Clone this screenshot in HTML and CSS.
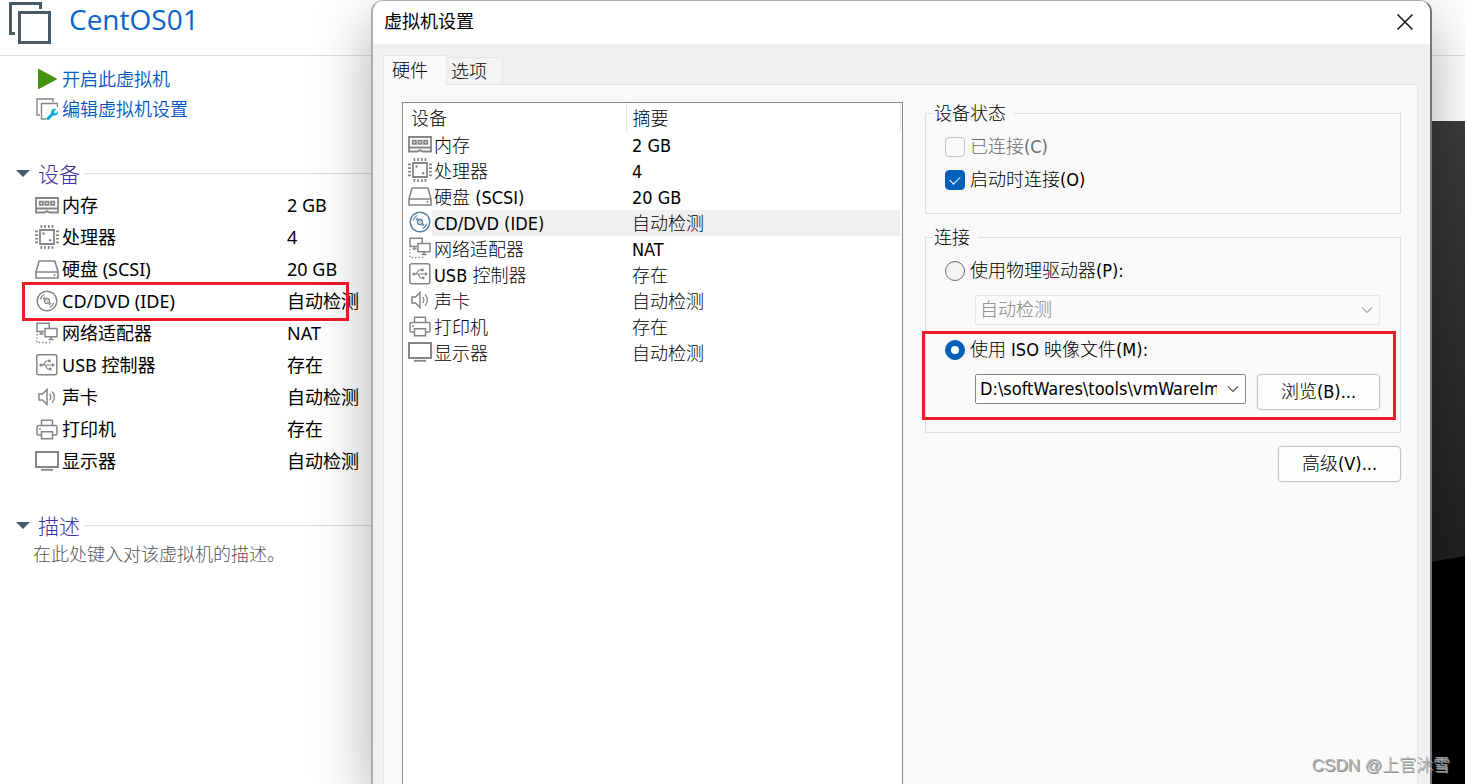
FILE: index.html
```html
<!DOCTYPE html>
<html lang="zh-CN">
<head>
<meta charset="utf-8">
<title>虚拟机设置</title>
<link rel="stylesheet" href="styles.css">
</head>
<body>
<svg class="sprite" aria-hidden="true">
  <symbol id="i-ram" viewBox="0 0 24 24"><path d="M1 5h22v10.500H1zM1 15.500v4h8.500l2.500-1.500 2.500 1.500H23v-4" stroke-width="1.800"/><path d="M4.700 8.700h3.200v3.200H4.700zM10.400 8.700h3.200v3.200h-3.200zM16.100 8.700h3.200v3.200h-3.200z" stroke-width="1.800"/></symbol>
  <symbol id="i-cpu" viewBox="0 0 24 24"><path d="M5 5h14v14H5z" stroke-width="1.800"/><path d="M5.500 1.500h13M5.500 22.500h13M1.500 5.500v13M22.500 5.500v13" stroke-width="3" stroke-dasharray="1.700 2"/><circle class="dot" cx="8.500" cy="8.500" r="1.200"/><circle class="dot" cx="15.200" cy="15.200" r="1.200"/></symbol>
  <symbol id="i-disk" viewBox="0 0 24 24"><path d="M4.200 4h15.600L23 14.500V21H1v-6.500zM1 15h22" stroke-width="1.600"/><circle class="dot" cx="19.500" cy="18" r="1"/></symbol>
  <symbol id="i-cd" viewBox="0 0 24 24"><circle cx="12" cy="12" r="9.800" stroke-width="1.500"/><circle cx="12" cy="12" r="2.500" stroke-width="1.300"/><circle class="dot" cx="12" cy="12" r=".7"/><path d="M5.300 10.300a7 7 0 0 1 4-4.800M8 10l2-2M18.700 13.700a7 7 0 0 1-4 4.800M16 14l-2 2" stroke-width="1.300"/></symbol>
  <symbol id="i-net" viewBox="0 0 24 24"><path d="M9 10.500H2V2.200h12.300V7M4.500 13h4M6.500 10.500V13" stroke-width="1.500"/><path d="M10 7.500h12v8.300H10zM16 16v2.500M13.500 18.500h5" stroke-width="1.500"/><path d="M2 13v8.500h15" stroke-width="1.400" stroke-dasharray="1.400 2"/></symbol>
  <symbol id="i-usb" viewBox="0 0 24 24"><rect x="1.800" y="1.800" width="20" height="20" rx="2" stroke-width="1.500"/><path d="M5 12h13M8 12l3-4h3M10 12l2.500 4H15" stroke-width="1.200"/><circle class="dot" cx="6" cy="12" r="1.600"/><circle class="dot" cx="14.500" cy="8" r="1.400"/><path class="dot" d="M17 10l3 2-3 2zM14 14.800h2.500v2.500H14z"/></symbol>
  <symbol id="i-sound" viewBox="0 0 24 24"><path d="M4 9h3.500L12 4.500v15L7.500 15H4z" stroke-width="1.500"/><path d="M14.500 9a4 4 0 0 1 0 6M17 6.500a7.500 7.500 0 0 1 0 11" stroke-width="1.300"/></symbol>
  <symbol id="i-print" viewBox="0 0 24 24"><path d="M6.500 8.500V3.200h11v5.300M6 18H3.500Q2 18 2 16.500V10q0-1.500 1.500-1.500h17Q22 8.500 22 10v6.500q0 1.500-1.500 1.500H18M6.500 14.700h11v7h-11z" stroke-width="1.500"/><circle class="dot" cx="5" cy="12" r=".9"/></symbol>
  <symbol id="i-screen" viewBox="0 0 24 24"><path d="M1 3h22v15H1z" stroke-width="2"/><path d="M6 20.800h12" stroke-width="1.800"/></symbol>
  <symbol id="i-chevron" viewBox="0 0 12 12"><path d="M1 3.500l5 5 5-5" stroke-width="1.100"/></symbol>
</svg>

<main class="host">
  <header class="host-head">
    <svg class="vm-logo" viewBox="0 0 44 44" aria-hidden="true"><path d="M7 33.500H2.500V3.500h30V9"/><path d="M11.500 12.500h30v30h-30z"/></svg>
    <h1 class="vm-name">CentOS01</h1>
  </header>
  <div class="host-body">
    <div class="summary">
      <nav class="actions">
        <a class="action" href="#start"><svg class="action-icon" viewBox="0 0 22 22" aria-hidden="true"><path fill="#459410" d="M2 .5L21.500 11 2 21.500z"/></svg>开启此虚拟机</a>
        <a class="action" href="#edit"><svg class="action-icon" viewBox="0 0 22 22" aria-hidden="true"><path fill="none" stroke="#858585" stroke-width="1.400" d="M4 17H1V1h16v3M10 21H5.500V5.500h16V9"/><path fill="none" stroke="#00aed6" stroke-width="3" stroke-linecap="round" d="M12 20.500l5-5"/><path fill="#00aed6" d="M20.500 11l-2.600 2.500.6 1.500 1.500.3 2-2.300c.7 3-1.500 5.200-4.500 4.500l-2.500-2.500c-.5-3 2.500-5.200 5.500-4z"/></svg>编辑虚拟机设置</a>
      </nav>
      <section>
        <h2 class="section-title">设备</h2>
        <table class="devices host-devices">
          <tr><th scope="row"><svg><use href="#i-ram"/></svg>内存</th><td>2 GB</td></tr>
          <tr><th scope="row"><svg><use href="#i-cpu"/></svg>处理器</th><td>4</td></tr>
          <tr><th scope="row"><svg><use href="#i-disk"/></svg>硬盘 (SCSI)</th><td>20 GB</td></tr>
          <tr class="marked"><th scope="row"><svg><use href="#i-cd"/></svg>CD/DVD (IDE)</th><td>自动检测</td></tr>
          <tr><th scope="row"><svg><use href="#i-net"/></svg>网络适配器</th><td>NAT</td></tr>
          <tr><th scope="row"><svg><use href="#i-usb"/></svg>USB 控制器</th><td>存在</td></tr>
          <tr><th scope="row"><svg><use href="#i-sound"/></svg>声卡</th><td>自动检测</td></tr>
          <tr><th scope="row"><svg><use href="#i-print"/></svg>打印机</th><td>存在</td></tr>
          <tr><th scope="row"><svg><use href="#i-screen"/></svg>显示器</th><td>自动检测</td></tr>
        </table>
      </section>
      <section class="about">
        <h2 class="section-title">描述</h2>
        <p class="description">在此处键入对该虚拟机的描述。</p>
      </section>
    </div>
    <div class="preview"><svg class="preview-curve" viewBox="0 0 100 240" preserveAspectRatio="none" aria-hidden="true"><path d="M0 34Q50 20 100 12V240H0z"/></svg></div>
  </div>
</main>

<div class="dialog" role="dialog" aria-labelledby="dialog-title">
  <header class="dialog-head">
    <h2 class="dialog-title" id="dialog-title">虚拟机设置</h2>
    <button class="close" type="button" aria-label="关闭"><svg viewBox="0 0 16 16"><path d="M.5.5l15 15M15.500.5l-15 15"/></svg></button>
  </header>
  <div class="dialog-body">
    <div class="tabs" role="tablist">
      <button class="tab active" type="button" role="tab" aria-selected="true">硬件</button>
      <button class="tab" type="button" role="tab" aria-selected="false">选项</button>
    </div>
    <div class="panel">
      <div class="list">
        <table class="devices">
          <thead><tr><th scope="col">设备</th><th scope="col">摘要</th></tr></thead>
          <tbody>
          <tr><th scope="row"><svg><use href="#i-ram"/></svg>内存</th><td>2 GB</td></tr>
          <tr><th scope="row"><svg><use href="#i-cpu"/></svg>处理器</th><td>4</td></tr>
          <tr><th scope="row"><svg><use href="#i-disk"/></svg>硬盘 (SCSI)</th><td>20 GB</td></tr>
          <tr class="selected"><th scope="row"><svg><use href="#i-cd"/></svg>CD/DVD (IDE)</th><td>自动检测</td></tr>
          <tr><th scope="row"><svg><use href="#i-net"/></svg>网络适配器</th><td>NAT</td></tr>
          <tr><th scope="row"><svg><use href="#i-usb"/></svg>USB 控制器</th><td>存在</td></tr>
          <tr><th scope="row"><svg><use href="#i-sound"/></svg>声卡</th><td>自动检测</td></tr>
          <tr><th scope="row"><svg><use href="#i-print"/></svg>打印机</th><td>存在</td></tr>
          <tr><th scope="row"><svg><use href="#i-screen"/></svg>显示器</th><td>自动检测</td></tr>
          </tbody>
        </table>
      </div>
      <form class="options">
        <fieldset class="group">
          <legend>设备状态</legend>
          <label class="choice disabled"><input type="checkbox" disabled>已连接(C)</label>
          <label class="choice"><input type="checkbox" checked>启动时连接(O)</label>
        </fieldset>
        <fieldset class="group">
          <legend>连接</legend>
          <label class="choice"><input type="radio" name="source">使用物理驱动器(P):</label>
          <div class="field">
            <div class="combo"><select disabled aria-label="物理驱动器"><option>自动检测</option></select><svg><use href="#i-chevron"/></svg></div>
          </div>
          <div class="iso">
            <label class="choice"><input type="radio" name="source" checked>使用 ISO 映像文件(M):</label>
            <div class="field">
              <div class="combo"><select aria-label="ISO 映像文件"><option>D:\softWares\tools\vmWareIm</option></select><svg><use href="#i-chevron"/></svg></div>
              <button class="button" type="button">浏览(B)...</button>
            </div>
          </div>
        </fieldset>
        <button class="button advanced" type="button">高级(V)...</button>
      </form>
    </div>
  </div>
</div>
<div class="watermark">CSDN @上官沐雪</div>
</body>
</html>
```
FILE: styles.css
```css
*, *::before, *::after { box-sizing: border-box; }

body {
  margin: 0;
  height: 100vh;
  position: relative;
  overflow: hidden;
  background: #fff;
  color: #000;
  font: 300 18px/24px "Noto Sans", "Open Sans", "Noto Sans CJK SC", sans-serif;
}

h1, h2, p { margin: 0; font-weight: inherit; }
svg { display: block; flex: none; }
.sprite { position: absolute; width: 0; height: 0; }
symbol { fill: none; stroke: currentColor; }
.dot { fill: currentColor; stroke: none; }

/* Host window */
.host { height: 100%; display: flex; flex-direction: column; }
.host-head {
  flex: none;
  height: 56px;
  display: flex;
  align-items: flex-start;
  gap: 17px;
  padding-left: 8px;
  border-bottom: 1px solid #dcdcdc;
}
.vm-logo { width: 44px; height: 44px; fill: none; stroke: #485a67; stroke-width: 3; }
.vm-name { font-family: "Open Sans", sans-serif; font-size: 28px; line-height: 38px; font-weight: 400; color: #0a63c9; }
.host-body { flex: 1; display: flex; min-height: 0; }
.summary { width: 400px; padding-top: 8px; }
.actions { display: flex; flex-direction: column; padding-left: 36px; }
.action {
  display: flex;
  align-items: center;
  gap: 4px;
  height: 30px;
  color: #0057c2;
  font-weight: 350;
  text-decoration: none;
}
.action-icon { width: 22px; height: 22px; }
.section-title {
  display: flex;
  align-items: center;
  gap: 4px;
  margin-top: 34px;
  padding-left: 16px;
  height: 31px;
  font-size: 21px;
  color: #4030a0;
}
.section-title::before {
  content: "";
  margin-right: 4px;
  border: 7px solid transparent;
  border-top-color: #485a67;
  border-bottom: 0;
}
.section-title::after { content: ""; flex: 1; height: 1px; background: #dcdcdc; }
.about .section-title { margin-top: 33px; }
.description { padding-left: 33px; line-height: 26px; color: #555; }

/* Device tables */
.devices { width: 100%; border-collapse: collapse; table-layout: fixed; }
.devices th, .devices td { padding: 0; font-weight: inherit; text-align: left; white-space: nowrap; }
.devices svg { display: inline-block; width: 24px; height: 24px; margin-right: 2px; vertical-align: top; color: #858585; }
.host-devices { font-weight: 400; }
.host-devices tr { height: 32px; }
.host-devices th { width: 287px; padding-left: 35px; }
.host-devices svg { margin-right: 3px; }
.marked { position: relative; }
.marked::after {
  content: "";
  position: absolute;
  left: 22px;
  top: -3px;
  width: 327px;
  height: 39px;
  border: 3px solid #ee1c24;
}

.preview {
  flex: 1;
  display: flex;
  align-items: flex-end;
  justify-content: flex-end;
  margin-top: 65px;
  background: linear-gradient(#3c3c3c, #202020 440px);
}
.preview-curve { width: 100px; height: 240px; }

/* Settings dialog */
.dialog {
  position: absolute;
  inset: 0 33px 0 371px;
  display: flex;
  flex-direction: column;
  overflow: hidden;
  border: 2px solid #adadad;
  border-top-width: 1px;
  border-bottom: 0;
  border-radius: 12px 12px 0 0;
  border-right-color: #777;
  background: #f0f0f0;
  box-shadow: 0 20px 60px rgba(0, 0, 0, .32);
  font-family: "DejaVu Sans Condensed", "DejaVu Sans", "Noto Sans CJK SC", sans-serif;
}
.dialog-head {
  flex: none;
  display: flex;
  justify-content: space-between;
  align-items: center;
  height: 43px;
  padding: 0 17px 2px 11px;
  background: #fff;
}
.dialog-title { font-size: 18px; font-weight: 400; }
.close { padding: 0; border: 0; background: none; }
.close svg { width: 16px; height: 16px; stroke: #111; stroke-width: 1.500; }
.dialog-body { flex: 1; display: flex; flex-direction: column; min-height: 0; padding: 11px 12px 0 10px; }
.tabs { display: flex; align-items: flex-end; }
.tab {
  height: 27px;
  padding: 1px 15px 0 4px;
  border: 1px solid #e5e5e5;
  border-width: 1px 1px 0 0;
  background: #f3f3f3;
  font: inherit;
}
.tab.active { height: 30px; margin-bottom: -1px; padding: 0 18px 0 8px; border-left-width: 1px; background: #f9f9f9; z-index: 1; }
.panel {
  flex: 1;
  display: flex;
  gap: 22px;
  min-height: 0;
  padding: 17px 16px 0 18px;
  border: 1px solid #e5e5e5;
  border-bottom: 0;
  background: #f9f9f9;
}
.list {
  flex: 500 1 0;
  padding-right: 1px;
  border: 1px solid #828790;
  border-bottom: 0;
  background: #fff;
}
.list tr { height: 26px; }
.list thead tr { height: 29px; }
.list thead th { padding: 2px 0 0 8px; border-right: 1px solid #e5e5e5; }
.list thead th:first-child { width: 223px; }
.list thead th:last-child { padding-left: 6px; }
.list tbody th { padding: 2px 0 0 5px; }
.list tbody td { padding: 2px 0 0 6px; }
.list svg { margin-top: -2px; }
.selected td { background: #f0f0f0; }
.selected th { background: linear-gradient(90deg, #fff 29px, #f0f0f0 29px); }
.selected svg { color: #5b7f9f; }

.options { flex: 478 1 0; display: flex; flex-direction: column; }
.group {
  display: flex;
  flex-direction: column;
  gap: 9px;
  min-width: 0;
  margin: 0 0 12px;
  padding: 10px 19px 21px;
  border: 1px solid #dcdcdc;
}
.group legend { margin-left: -12px; padding: 1px 8px 0 1px; line-height: 22px; }
.group + .group { gap: 12px; margin-bottom: 13px; padding-bottom: 22px; }
.choice { display: flex; align-items: center; gap: 5px; height: 24px; }
.disabled { color: #6c6c6c; }
.choice input {
  appearance: none;
  flex: none;
  display: grid;
  place-items: center;
  width: 20px;
  height: 20px;
  margin: 0;
  border: 1px solid #6c6c6c;
  border-radius: 4px;
  background: #f3f3f3;
}
.choice input:disabled { border-color: #c4c4c4; background: #fafafa; }
.choice input[type="radio"] { border-radius: 50%; }
.choice input:checked { border-color: #005fb8; background: #005fb8; }
.choice input[type="checkbox"]:checked::before {
  content: "";
  width: 10px;
  height: 6px;
  margin-bottom: 3px;
  border: solid #fff;
  border-width: 0 0 1px 1px;
  transform: rotate(-45deg);
}
.choice input[type="radio"]:checked::before { content: ""; width: 8px; height: 8px; border-radius: 50%; background: #fff; }
.field { display: flex; align-items: flex-start; gap: 11px; padding-left: 30px; }
.combo { flex: 1; min-width: 0; position: relative; }
.combo select {
  appearance: none;
  display: block;
  width: 100%;
  height: 30px;
  padding: 0 28px 0 4px;
  border: 1px solid #858585;
  border-radius: 2px;
  background: #fff;
  color: #000;
  font: inherit;
}
.combo select:disabled { border-color: #e5e5e5; background: #fafafa; color: #858585; opacity: 1; }
.combo svg { position: absolute; right: 7px; top: 9px; width: 12px; height: 12px; color: #555; pointer-events: none; }
.combo select:disabled + svg { color: #aaa; }
.iso { position: relative; display: flex; flex-direction: column; gap: 12px; margin-top: 1px; }
.iso::after {
  content: "";
  position: absolute;
  inset: -7px -15px -10px -23px;
  border: 3px solid #ee1c24;
  pointer-events: none;
}
.button {
  flex: none;
  width: 123px;
  height: 36px;
  border: 1px solid #c4c4c4;
  border-radius: 4px;
  background: #fdfdfd;
  box-shadow: 0 0 0 1px #f0f0f0;
  color: #000;
  font: inherit;
}
.group .field { margin-right: 1px; }
.advanced { align-self: flex-end; }

.watermark {
  position: absolute;
  right: 15px;
  bottom: 6px;
  color: #b4b4b4;
  font-family: "Liberation Sans", "Noto Sans CJK SC", sans-serif;
  font-size: 17px;
  text-shadow: 1px 1px 0 #888;
}
```
